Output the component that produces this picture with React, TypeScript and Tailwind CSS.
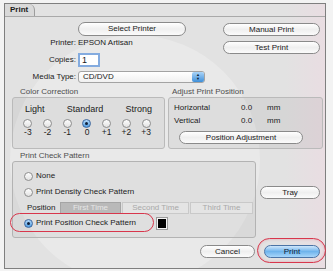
import React from 'react';

type BtnProps = { label: string; className?: string; primary?: boolean };

const AquaButton = ({ label, className = '', primary = false }: BtnProps) => (
  <div
    className={`flex items-center justify-center rounded-full border text-[8px] leading-none ${
      primary
        ? 'border-[#4b74a6] bg-linear-to-b from-[#cfe7fb] via-[#6fb4ec] to-[#a7d6fa] text-[#0d1e36]'
        : 'border-[#8a8a8a] bg-linear-to-b from-white via-[#efefef] to-[#fbfbfb] text-[#1b1b1b]'
    } ${className}`}
  >
    {label}
  </div>
);

const Radio = ({ on = false }: { on?: boolean }) => (
  <span
    className={`inline-flex h-[9px] w-[9px] shrink-0 items-center justify-center rounded-full border ${
      on
        ? 'border-[#3c679f] bg-linear-to-b from-[#b3dafa] to-[#4f9de0]'
        : 'border-[#8e8e8e] bg-linear-to-b from-[#fdfdfd] to-[#e2e2e2]'
    }`}
  >
    {on && <span className="h-[3px] w-[3px] rounded-full bg-[#0f203a]" />}
  </span>
);

const steps = ['-3', '-2', '-1', '0', '+1', '+2', '+3'];

export default function App() {
  return (
    <div className="relative h-[271px] w-[333px] overflow-hidden bg-[#f3f3f3] pl-[4px] pt-[3px] font-['Liberation_Sans',Arial,sans-serif] text-[8px] leading-none text-[#1b1b1b]">
      <div className="relative h-[266px] w-[322px] overflow-hidden border border-[#7f7f7f] bg-[#e2e2e2]">
        {/* CD watermark */}
        <div className="pointer-events-none absolute left-[5px] top-[31px] h-[250px] w-[250px] rounded-full bg-white/25" />
        <div className="pointer-events-none absolute right-0 top-0 h-full w-[40px] bg-linear-to-r from-transparent to-[#e9dde2]" />

        <div className="relative">
          {/* title tab */}
          <div className="flex h-[13px] border-b border-[#a9a9a9]">
            <div className="flex w-[30px] items-center rounded-tr-[6px] border-r border-[#9d9d9d] bg-[#d9d9d9] pl-[5px] font-bold">
              Print
            </div>
          </div>

          {/* printer section */}
          <div className="flex">
            <div className="flex w-[210px] flex-col pt-[5px]">
              <div className="pl-[73px]">
                <AquaButton label="Select Printer" className="h-[14px] w-[108px]" />
              </div>
              <div className="mt-[2px] flex h-[10px] items-center">
                <span className="w-[71px] text-right">Printer:</span>
                <span className="ml-[2px]">EPSON Artisan</span>
              </div>
              <div className="mt-[5px] flex h-[14px] items-center">
                <span className="w-[71px] text-right">Copies:</span>
                <div className="ml-[2px] flex h-[14px] w-[22px] items-center border-2 border-[#84abdf] bg-white pl-[2px] text-[9px]">1</div>
              </div>
              <div className="mt-[4px] flex h-[12px] items-center">
                <span className="w-[71px] text-right">Media Type:</span>
                <div className="ml-[2px] flex h-[12px] w-[127px] items-center justify-between rounded-[3px] border border-[#a3a3a3] bg-linear-to-b from-white to-[#f0f0f0] pl-[4px]">
                  <span>CD/DVD</span>
                  <span className="flex h-[10px] w-[12px] flex-col items-center justify-center rounded-[2px] bg-linear-to-b from-[#a9d4f8] to-[#3d8fd8] text-[4px] leading-[4px] text-[#0d1e36]">
                    <span>▲</span>
                    <span>▼</span>
                  </span>
                </div>
              </div>
            </div>
            <div className="ml-[8px] flex flex-col pt-[6px]">
              <AquaButton label="Manual Print" className="h-[13px] w-[97px]" />
              <AquaButton label="Test Print" className="mt-[5px] h-[13px] w-[97px]" />
            </div>
          </div>

          {/* correction + position */}
          <div className="mt-[5px] flex gap-[3px] pl-[7px] pr-[2px]">
            <div className="flex w-[153px] flex-col">
              <div className="h-[9px] pl-[8px] text-[#4d4d4d]">Color Correction</div>
              <div className="h-[52px] rounded-[3px] border border-[#bababa] bg-black/[0.05]">
                <div className="mt-[6px] flex h-[10px] items-center justify-between px-[12px] text-[9px]">
                  <span>Light</span>
                  <span>Standard</span>
                  <span>Strong</span>
                </div>
                <div className="ml-[5px] mt-[5px] grid w-[138px] grid-cols-7">
                  {steps.map((s) => (
                    <div key={s} className="flex flex-col items-center">
                      <Radio on={s === '0'} />
                      <span className="h-[9px] text-[8.5px] leading-[9px]">{s}</span>
                    </div>
                  ))}
                </div>
              </div>
            </div>
            <div className="flex flex-1 flex-col">
              <div className="h-[9px] pl-[4px] text-[#4d4d4d]">Adjust Print Position</div>
              <div className="h-[52px] rounded-[3px] border border-[#bababa] bg-black/[0.05]">
                <div className="mt-[5px] flex h-[10px] items-center pl-[5px]">
                  <span className="w-[67px]">Horizontal</span>
                  <span className="w-[26px]">0.0</span>
                  <span>mm</span>
                </div>
                <div className="mt-[3px] flex h-[10px] items-center pl-[5px]">
                  <span className="w-[67px]">Vertical</span>
                  <span className="w-[26px]">0.0</span>
                  <span>mm</span>
                </div>
                <AquaButton label="Position Adjustment" className="ml-[10px] mt-[5px] h-[13px] w-[124px]" />
              </div>
            </div>
          </div>

          {/* check pattern */}
          <div className="mt-[3px] flex pl-[7px]">
            <div className="flex flex-col">
              <div className="h-[9px] pl-[8px] text-[#4d4d4d]">Print Check Pattern</div>
              <div className="h-[77px] w-[244px] rounded-[3px] border border-[#b3b3b3] bg-black/[0.04]">
                <div className="mt-[9px] flex h-[10px] items-center gap-[3px] pl-[11px]">
                  <Radio />
                  <span>None</span>
                </div>
                <div className="mt-[6px] flex h-[10px] items-center gap-[3px] pl-[11px]">
                  <Radio />
                  <span>Print Density Check Pattern</span>
                </div>
                <div className="mt-[5px] flex h-[12px] items-center pl-[14px]">
                  <span className="w-[33px]">Position</span>
                  <div className="flex h-[12px] w-[61px] items-center justify-center border border-[#a5a5a5] bg-[#b9b9b9] text-[#e6e6e6]">First Time</div>
                  <div className="ml-[1px] flex h-[12px] w-[67px] items-center justify-center border border-[#c9c9c9] bg-[#e4e4e4] text-[#a9a9a9]">Second Time</div>
                  <div className="ml-[1px] flex h-[12px] w-[63px] items-center justify-center border border-[#c9c9c9] bg-[#e4e4e4] text-[#a9a9a9]">Third Time</div>
                </div>
                <div className="mt-[4px] flex h-[10px] items-center pl-[11px]">
                  <Radio on />
                  <span className="ml-[3px] w-[118px]">Print Position Check Pattern</span>
                  <span className="ml-[3px] h-[11px] w-[10px] border-[1.5px] border-[#f4f4f4] bg-black ring-1 ring-[#9a9a9a]" />
                </div>
              </div>
            </div>
            <AquaButton label="Tray" className="ml-[4px] mt-[34px] h-[13px] w-[60px]" />
          </div>

          {/* dialog buttons */}
          <div className="mt-[7px] flex justify-end gap-[9px] pr-[5px]">
            <AquaButton label="Cancel" className="h-[13px] w-[55px]" />
            <AquaButton label="Print" primary className="h-[13px] w-[56px]" />
          </div>
        </div>
      </div>

      {/* red highlight rings */}
      <div className="pointer-events-none absolute left-[10px] top-[213px] h-[19px] w-[144px] rounded-full border-[1.5px] border-[#d8364c]" />
      <div className="pointer-events-none absolute left-[257px] top-[238px] h-[25px] w-[69px] rounded-full border-[1.5px] border-[#d8364c] shadow-[inset_0_0_3px_rgba(216,54,76,0.35)]" />
    </div>
  );
}
